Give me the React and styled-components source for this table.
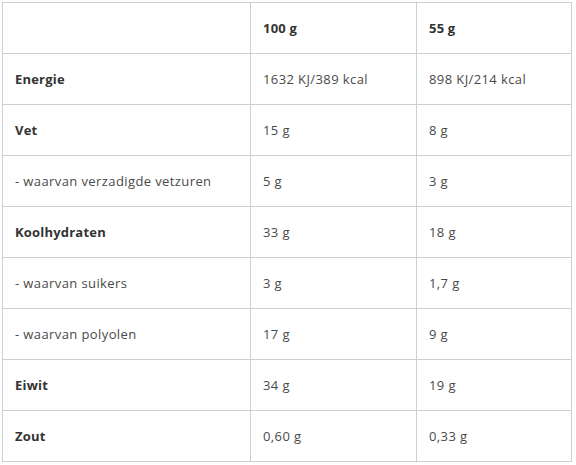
import React from "react";
import styled, { createGlobalStyle } from "styled-components";

const Global = createGlobalStyle`
  html, body { margin: 0; padding: 0; background: #fff; }
  body { font-family: "Open Sans", "Noto Sans", sans-serif; }
`;

const Wrap = styled.div`
  padding: 2px;
`;

const Grid = styled.div`
  display: grid;
  grid-template-columns: 248px 166px 155px;
  grid-auto-rows: 51px;
  border-left: 1px solid #cfcfcf;
  border-top: 1px solid #cfcfcf;
  width: max-content;
`;

const Cell = styled.div`
  box-sizing: border-box;
  border-right: 1px solid #cfcfcf;
  border-bottom: 1px solid #cfcfcf;
  display: flex;
  align-items: center;
  padding: 0 0 0 12px;
  font-size: 13px;
  letter-spacing: ${(p) => (p.$bold ? "0.2px" : "0.4px")};
  color: ${(p) => (p.$bold ? "#333" : "#4a4a4a")};
  font-weight: ${(p) => (p.$bold ? 700 : 400)};
  white-space: nowrap;
`;

const rows = [
  ["Energie", "1632 KJ/389 kcal", "898 KJ/214 kcal", true],
  ["Vet", "15 g", "8 g", true],
  ["- waarvan verzadigde vetzuren", "5 g", "3 g", false],
  ["Koolhydraten", "33 g", "18 g", true],
  ["- waarvan suikers", "3 g", "1,7 g", false],
  ["- waarvan polyolen", "17 g", "9 g", false],
  ["Eiwit", "34 g", "19 g", true],
  ["Zout", "0,60 g", "0,33 g", true],
];

export default function App() {
  return (
    <Wrap>
      <Global />
      <Grid>
        <Cell />
        <Cell $bold>100 g</Cell>
        <Cell $bold>55 g</Cell>
        {rows.map(([a, b, c, bold]) => (
          <React.Fragment key={a}>
            <Cell $bold={bold}>{a}</Cell>
            <Cell>{b}</Cell>
            <Cell>{c}</Cell>
          </React.Fragment>
        ))}
      </Grid>
    </Wrap>
  );
}
